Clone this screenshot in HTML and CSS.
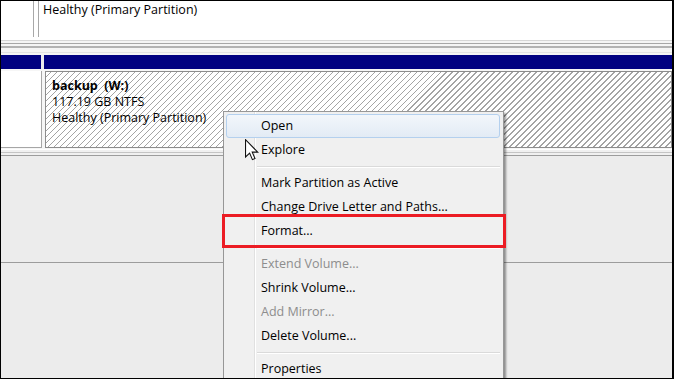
FILE: index.html
```html
<!DOCTYPE html>
<html lang="en">
<head>
    <meta charset="UTF-8">
    <title>Disk Management</title>
    <link rel="stylesheet" href="styles.css">
</head>
<body>
<div class="screen">
    <div class="disk-top">
        <div class="info-top"></div>
        <div class="part-top">Healthy (Primary Partition)</div>
    </div>
    <div class="gap"></div>
    <div class="disk-head">
        <div class="head-left"></div>
        <div class="head-right"></div>
    </div>
    <div class="disk-main">
        <div class="info-main"></div>
        <div class="hatched">
            <div class="name">backup&nbsp; (W:)</div>
            <div>117.19 GB NTFS</div>
            <div>Healthy (Primary Partition)</div>
        </div>
    </div>
    <div class="band"></div>
    <div class="row-empty"></div>
    <div class="row-empty"></div>

    <ul class="menu">
        <li class="item hover">Open</li>
        <li class="item">Explore</li>
        <li class="sep"></li>
        <li class="item">Mark Partition as Active</li>
        <li class="item">Change Drive Letter and Paths...</li>
        <li class="item">Format...</li>
        <li class="sep"></li>
        <li class="item off">Extend Volume...</li>
        <li class="item">Shrink Volume...</li>
        <li class="item off">Add Mirror...</li>
        <li class="item">Delete Volume...</li>
        <li class="sep"></li>
        <li class="item">Properties</li>
    </ul>
    <div class="mark"></div>
    <svg class="cursor" viewBox="0 0 13 21" width="14" height="23">
        <path d="M0.5 0.5 L0.5 16.5 L4.3 12.9 L6.9 19 L9.3 18 L6.7 12 L11.8 12 Z" fill="#fff" stroke="#111" stroke-width="1"/>
    </svg>
</div>
</body>
</html>
```

FILE: styles.css
```css
*{
    margin: 0px;
    padding: 0px;
    box-sizing: border-box;
}
body{
    background: #000;
    font-family: "Open Sans", "Liberation Sans", sans-serif;
    font-size: 12.5px;
    color: #000;
}
.screen{
    width: 674px;
    height: 379px;
    border: 1px solid #000;
    border-right-width: 2px;
    background: #ececec;
    position: relative;
    overflow: hidden;
}
/* top disk row, cut off */
.disk-top{
    display: flex;
    height: 40px;
    background: #fff;
    border-bottom: 1px solid #d6d6d6;
    padding-bottom: 3px;
}
.info-top{
    width: 33px;
    border-right: 1px solid #a8a8a8;
}
.part-top{
    flex: 1;
    margin-left: 4px;
    border-left: 1px solid #a8a8a8;
    padding-left: 4px;
    line-height: 18px;
}
.gap{
    height: 14px;
    background: linear-gradient(to bottom, #f4f4f4 0 2px, #a6a6a6 2px 3px, #f4f4f4 3px 5px, #b2b2b2 5px 7px, #f4f4f4 7px 11px, #e2e2e2 11px 12px, #f4f4f4 12px);
}
.disk-head{
    display: flex;
    height: 14px;
}
.head-left{
    width: 40px;
    background: #000080;
}
.head-right{
    flex: 1;
    margin-left: 3px;
    background: #000080;
}
.disk-main{
    display: flex;
    height: 80px;
    background: #f6f6f6;
    padding-top: 2px;
}
.info-main{
    width: 41px;
    height: 77px;
    background: #fff;
    border-right: 1px solid #a6a6a6;
    border-bottom: 1px solid #a6a6a6;
}
.hatched{
    flex: 1;
    height: 77px;
    margin-left: 3px;
    border: 1px solid #8c8c8c;
    background: repeating-linear-gradient(135deg, #fff 0 3px, #a4a4a4 3px 4px, #fff 4px 4.24px);
    padding: 6px 0 0 6px;
    line-height: 16px;
}
.hatched div{
    display: inline-block;
    width: 100%;
}
.hatched .name{
    font-weight: bold;
}
.band{
    height: 6px;
    background: linear-gradient(to bottom, #fff 0 1px, #f0f0f0 1px 3px, #c4c4c4 3px 4px, #f0f0f0 4px);
}
.row-empty{
    height: 107px;
    border-top: 1px solid #9c9c9c;
    background: #ececec;
}
/* context menu */
.menu{
    position: absolute;
    left: 222px;
    top: 110px;
    width: 281px;
    height: 290px;
    list-style: none;
    border: 1px solid #979797;
    box-shadow: 2px 2px 2px rgba(0,0,0,0.4);
    padding: 2px 0;
    background: linear-gradient(to right, #f0f0f0 0 30px, #e0e0e0 30px 31px, #fff 31px 32px, #f0f0f0 32px);
}
.item{
    height: 24px;
    line-height: 22px;
    margin: 0 3px 0 2px;
    padding-left: 34px;
    border: 1px solid transparent;
    white-space: nowrap;
}
.item.hover{
    border-color: #b4d0ee;
    border-radius: 3px;
    background: linear-gradient(#f2f6fb, #e3ebf5);
}
.item.off{
    color: #8d8d8d;
}
.sep{
    height: 2px;
    margin: 4px 3px 3px 33px;
    border-top: 1px solid #dadada;
    border-bottom: 1px solid #fff;
}
.mark{
    position: absolute;
    left: 221px;
    top: 213px;
    width: 284px;
    height: 34px;
    border: 3px solid #ec1c24;
}
.cursor{
    position: absolute;
    left: 244px;
    top: 138px;
}
```
